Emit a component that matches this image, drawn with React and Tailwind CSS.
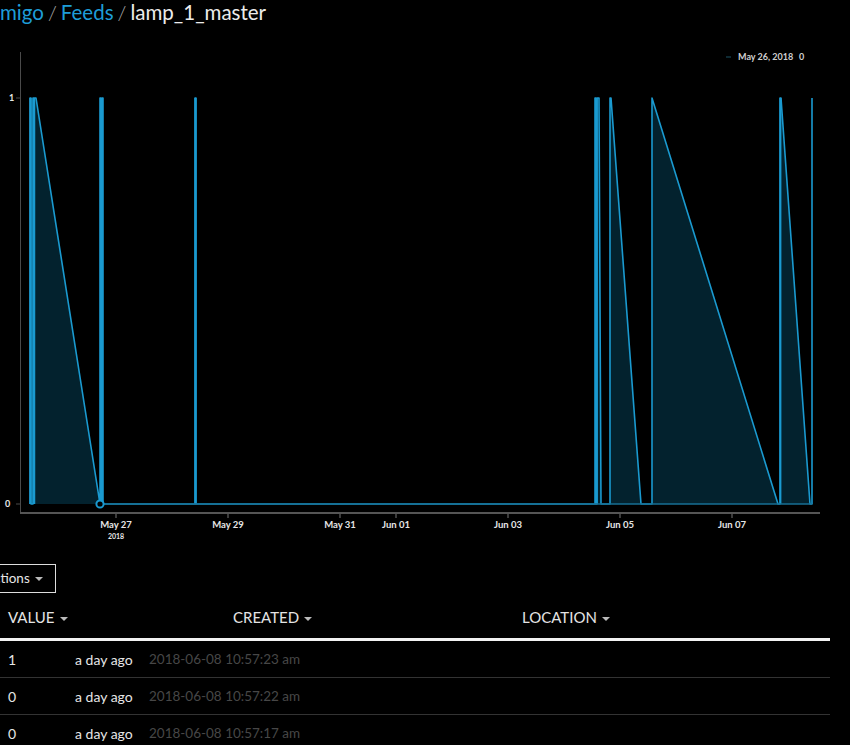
import React from 'react';

const FONT = 'Lato, "Open Sans", sans-serif';

// chart geometry in page coordinates (svg viewBox starts at y=40)
const Y1 = 98;
const Y0 = 504;

const linePts = [
  [30, Y0], [30, Y1], [31, Y1], [31, Y0], [33, Y0], [33, Y1], [36, Y1], [100, Y0],
  [100, Y1], [101, Y1], [101, Y0], [102, Y0], [102, Y1], [103, Y1], [103, Y0],
  [195, Y0], [195, Y1], [196, Y1], [196, Y0],
  [595, Y0], [595, Y1], [596, Y1], [596, Y0], [597, Y0], [597, Y1], [599, Y1], [601, Y0],
  [610, Y0], [610, Y1], [611, Y1], [641, Y0], [652, Y0], [652, Y1], [778, Y0],
  [780, Y0], [780, Y1], [781, Y1], [810, Y0], [812, Y0], [812, Y1],
];

const ticks = [
  { x: 116, label: 'May 27', year: '2018' },
  { x: 228, label: 'May 29' },
  { x: 340, label: 'May 31' },
  { x: 396, label: 'Jun 01' },
  { x: 508, label: 'Jun 03' },
  { x: 620, label: 'Jun 05' },
  { x: 732, label: 'Jun 07' },
];

const rows = [
  { value: '1', ago: 'a day ago', at: '2018-06-08 10:57:23 am' },
  { value: '0', ago: 'a day ago', at: '2018-06-08 10:57:22 am' },
  { value: '0', ago: 'a day ago', at: '2018-06-08 10:57:17 am' },
];

const Caret = () => (
  <span className="inline-block ml-[5px] align-middle w-0 h-0 border-l-[4px] border-r-[4px] border-t-[4px] border-l-transparent border-r-transparent border-t-[#bbb]" />
);

const Chart = () => {
  const pts = linePts.map((p) => p.join(',')).join(' ');
  const area = `30,${Y0} ${pts} 812,${Y0}`;
  return (
    <svg width="850" height="510" viewBox="0 40 850 510" className="block" fontFamily={FONT}>
      {/* legend */}
      <line x1="726" y1="57" x2="731" y2="57" stroke="#1d5566" strokeWidth="1" />
      <text x="738" y="60" fontSize="9" fontWeight="700" fill="#cfcfcf">May 26, 2018</text>
      <text x="799" y="60" fontSize="9" fontWeight="700" fill="#cfcfcf">0</text>

      {/* area + line */}
      <polygon points={area} fill="#03222e" />
      <polyline points={pts} fill="none" stroke="#1a9ad0" strokeWidth="1.6" strokeLinejoin="round" />
      <line x1="30.5" y1={Y1} x2="30.5" y2={Y0} stroke="#1a9ad0" strokeWidth="2" />
      <line x1="34" y1={Y1} x2="34" y2={Y0} stroke="#1a9ad0" strokeWidth="2.5" />
      <line x1="101" y1={Y1} x2="101" y2={Y0} stroke="#1a9ad0" strokeWidth="2" />
      <line x1="195.5" y1={Y1} x2="195.5" y2={Y0} stroke="#1a9ad0" strokeWidth="2" />
      <line x1="596.5" y1={Y1} x2="596.5" y2={Y0} stroke="#1a9ad0" strokeWidth="2.5" />
      <line x1="780.5" y1={Y1} x2="780.5" y2={Y0} stroke="#1a9ad0" strokeWidth="1.8" />
      <line x1="103" y1={Y0} x2="812" y2={Y0} stroke="#176f94" strokeWidth="1.6" />
      <circle cx="100" cy={Y0} r="3.6" fill="#000" stroke="#1a9ad0" strokeWidth="2" />

      {/* y axis */}
      <line x1="20.5" y1="52" x2="20.5" y2="513" stroke="#4a4a4a" strokeWidth="1" />
      <line x1="16" y1={Y1} x2="20" y2={Y1} stroke="#4a4a4a" />
      <line x1="16" y1={Y0} x2="20" y2={Y0} stroke="#4a4a4a" />
      <text x="9" y="101" fontSize="9" fontWeight="700" fill="#e8e8e8">1</text>
      <text x="5" y="507" fontSize="9" fontWeight="700" fill="#e8e8e8">0</text>

      {/* x axis */}
      <line x1="20" y1="513" x2="820" y2="513" stroke="#555" strokeWidth="2" />
      {ticks.map((t) => (
        <g key={t.label}>
          <line x1={t.x} y1="514" x2={t.x} y2="518" stroke="#777" />
          <text x={t.x} y="528" fontSize="9.5" fontWeight="700" fill="#e6e6e6" textAnchor="middle">{t.label}</text>
          {t.year && (
            <text x={t.x} y="539" fontSize="7" fontWeight="700" fill="#e6e6e6" textAnchor="middle">{t.year}</text>
          )}
        </g>
      ))}
    </svg>
  );
};

const App = () => {
  return (
    <div className="w-[850px] h-[745px] bg-black overflow-hidden" style={{ fontFamily: FONT }}>
      {/* breadcrumb */}
      <div className="h-[40px] flex items-start text-[20.5px] leading-[24px] whitespace-nowrap">
        <span className="text-[#1e9dd8]">migo</span>
        <span className="text-[#aaa] font-light mx-[4px]">/</span>
        <span className="text-[#1e9dd8]">Feeds</span>
        <span className="text-[#aaa] font-light mx-[4px]">/</span>
        <span className="text-[#ececec]">lamp_1_master</span>
      </div>

      <Chart />

      {/* actions */}
      <div className="mt-[14px] -ml-[26px] w-fit border border-[#ddd] h-[29px] flex items-center pl-[10px] pr-[12px] text-[13.5px] text-[#e6e6e6]">
        Actions
        <Caret />
      </div>

      {/* table */}
      <div className="w-[830px] mt-[3px]">
        <div className="flex items-center h-[45px] text-[15px] text-[#e4e4e4] border-b-[3px] border-[#f2f2f2]">
          <div className="w-[233px] pl-[8px]">VALUE<Caret /></div>
          <div className="w-[289px]">CREATED<Caret /></div>
          <div>LOCATION<Caret /></div>
        </div>
        {rows.map((r, i) => (
          <div key={i} className="flex items-center h-[37px] text-[14px] border-b border-[#333]">
            <div className="w-[75px] pl-[8px] text-[#e6e6e6]">{r.value}</div>
            <div className="w-[74px] text-[#e6e6e6]">{r.ago}</div>
            <div className="text-[#474747] text-[13.5px]">{r.at}</div>
          </div>
        ))}
      </div>
    </div>
  );
};

export default App;
